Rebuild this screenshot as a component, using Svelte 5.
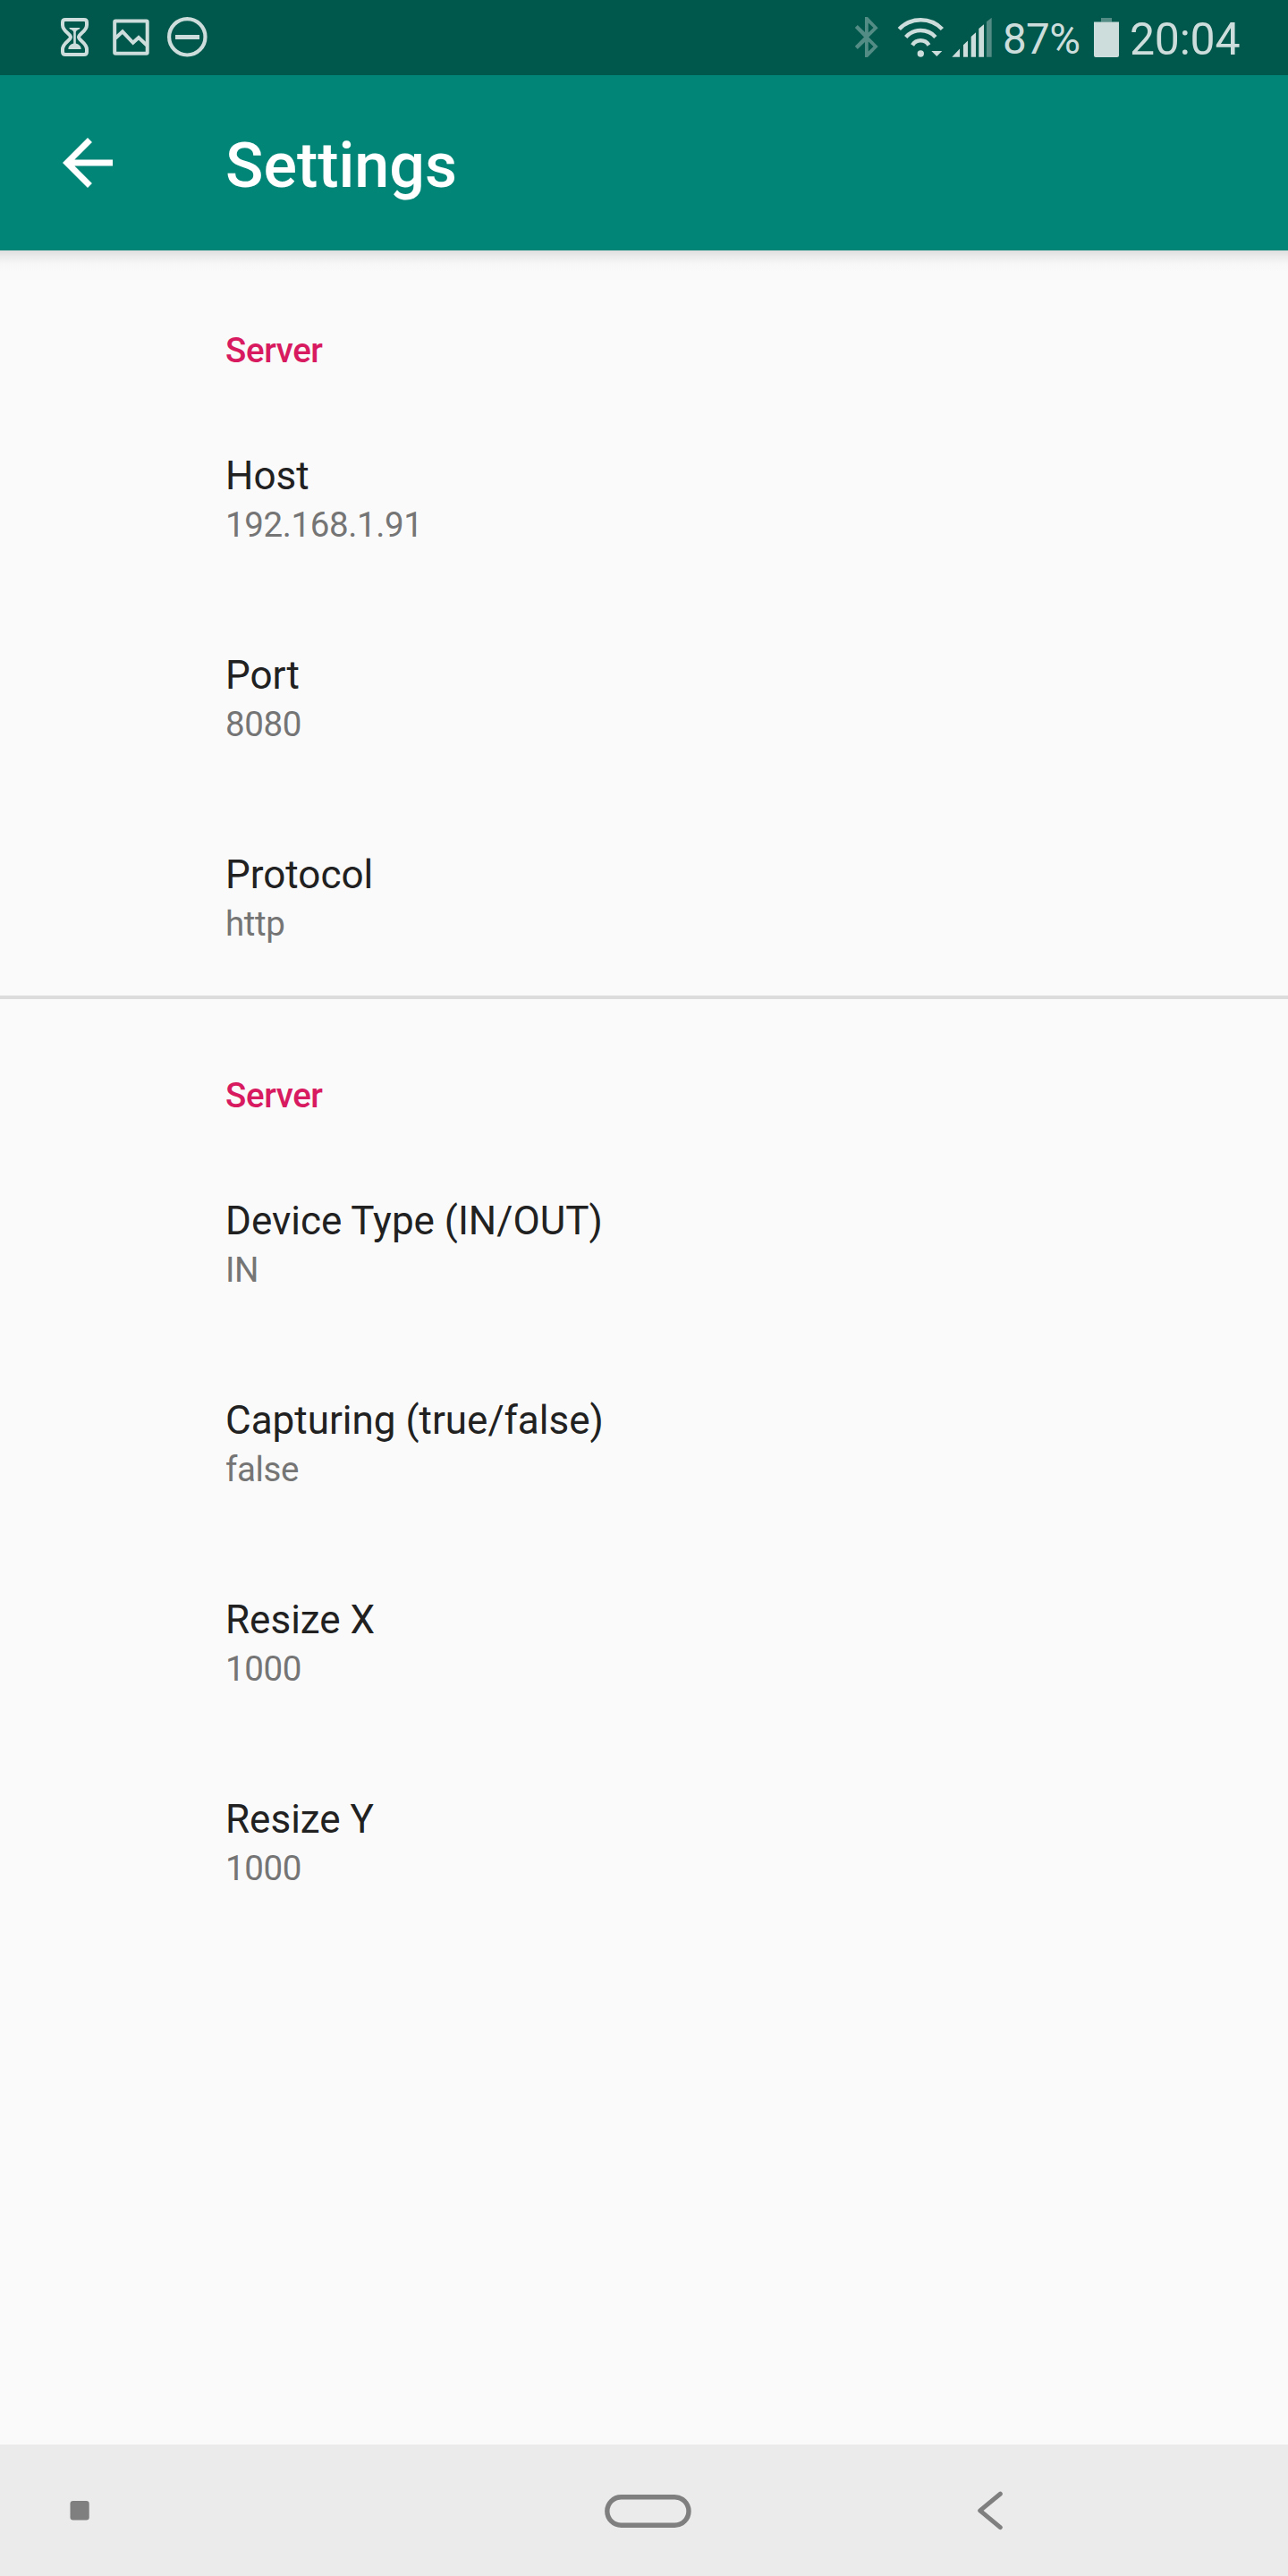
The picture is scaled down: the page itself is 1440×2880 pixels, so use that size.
<script>
  const groups = [
    {
      title: 'Server',
      items: [
        { label: 'Host', value: '192.168.1.91' },
        { label: 'Port', value: '8080' },
        { label: 'Protocol', value: 'http' },
      ],
    },
    {
      title: 'Server',
      items: [
        { label: 'Device Type (IN/OUT)', value: 'IN' },
        { label: 'Capturing (true/false)', value: 'false' },
        { label: 'Resize X', value: '1000' },
        { label: 'Resize Y', value: '1000' },
      ],
    },
  ];
</script>

<div class="screen">
  <div class="status">
    <div class="notifications">
      <svg width="36" height="48" viewBox="0 0 36 48">
        <path d="M7 4H28Q31 4 31 7V10C31 17 22 20 22 23.5C22 27 31 30 31 37V40Q31 43 28 43H7Q4 43 4 40V37C4 30 13 27 13 23.5C13 20 4 17 4 10V7Q4 4 7 4Z" fill="none" stroke="currentColor" stroke-width="4" />
        <path d="M11.3 13H23.5L22.8 14.5Q18.8 16 18.8 18V30.5Q24.7 32 24.7 37H10.3Q10.3 32 16.2 30.5V18Q16.2 16 12 14.5Z" fill="currentColor" />
      </svg>
      <svg width="46" height="48" viewBox="0 0 46 48" fill="none" stroke="currentColor" stroke-width="4">
        <rect x="4.2" y="5.4" width="36.5" height="36.3" rx="1" />
        <path d="M5 24.8 13 17.3 24.7 29.8 31 24 40 32.5" />
      </svg>
      <svg width="48" height="48" viewBox="0 0 48 48" fill="none" stroke="currentColor">
        <circle cx="24.3" cy="23.3" r="20.2" stroke-width="4.2" />
        <path d="M11 23.5H38" stroke-width="5" />
      </svg>
    </div>
    <div class="system">
      <svg class="bluetooth" width="30" height="48" viewBox="0 0 30 48">
        <path fill="currentColor" fill-rule="evenodd" d="M13 1h3L27.7 13.3 17.3 23.5 27.7 34 16 46h-3V29L4.8 37 1.8 33.8 12 23.5 1.8 13 4.8 10 13 18ZM16.8 7.5V18.5L22.5 13ZM16.8 28.5V39.5L22.5 34Z" />
      </svg>
      <svg class="wifi" width="56" height="48" viewBox="0 0 56 48">
        <g fill="none" stroke="currentColor" stroke-width="4.5">
          <path d="M3.3 14.5A33.3 33.3 0 0 1 51.4 14.5" />
          <path d="M10.7 23.4A22.5 22.5 0 0 1 43.9 23.4" />
          <path d="M18.1 32.5A10.8 10.8 0 0 1 36.5 32.5" />
        </g>
        <circle cx="27.3" cy="42" r="3.7" fill="currentColor" />
        <path d="M39.3 39H51.3L45.3 45Z" fill="currentColor" />
      </svg>
      <svg class="signal" width="50" height="48" viewBox="0 0 50 48" fill="currentColor">
        <path d="M2.3 45.7 11 36.5V45.7ZM15 45.7V32.3L20 27.5V45.7ZM23.7 45.7V23L29 18.3V45.7ZM32.3 45.7V14L38 9.3V45.7Z" />
        <path class="faint" d="M41 45.7V6.3L46.7 1.7V45.7Z" />
      </svg>
      <span class="percent">87%</span>
      <svg class="battery" width="28" height="48" viewBox="0 0 28 48" fill="currentColor">
        <path class="faint" d="M8 2H20V6.5H8Z" />
        <path d="M0 6.5H28V44Q28 46 26 46H2Q0 46 0 44Z" />
      </svg>
      <span class="clock">20:04</span>
    </div>
  </div>

  <header class="appbar">
    <svg width="84" height="84" viewBox="0 0 24 24">
      <path fill="#fff" d="M20 11H7.83l5.59-5.59L12 4l-8 8 8 8 1.41-1.41L7.83 13H20v-2z" />
    </svg>
    <h1>Settings</h1>
  </header>

  <main>
    {#each groups as group}
      <section>
        <h2>{group.title}</h2>
        {#each group.items as item}
          <div class="row">
            <div class="label">{item.label}</div>
            <div class="value">{item.value}</div>
          </div>
        {/each}
      </section>
    {/each}
  </main>

  <nav>
    <svg class="recent" width="24" height="24" viewBox="0 0 24 24">
      <rect x="1.5" y="1.1" width="21.2" height="21.4" rx="3.2" fill="#7f7f7f" />
    </svg>
    <svg class="home" width="100" height="40" viewBox="0 0 100 40">
      <rect x="3.8" y="2.8" width="91.2" height="31.4" rx="15.7" fill="none" stroke="#7f7f7f" stroke-width="5.4" />
    </svg>
    <svg class="back" width="32" height="46" viewBox="0 0 32 46">
      <path d="M26.3 4.2 3.7 22.9 26.3 41.7" fill="none" stroke="#7f7f7f" stroke-width="5" stroke-linecap="round" stroke-linejoin="round" />
    </svg>
  </nav>
</div>

<style>
  :global(body) {
    margin: 0;
    background: #fafafa;
  }
  .screen {
    width: 1440px;
    height: 2880px;
    display: flex;
    flex-direction: column;
    overflow: hidden;
    background: #fafafa;
    font-family: Roboto, sans-serif;
  }
  svg {
    display: block;
    flex: none;
  }
  .status {
    flex: none;
    height: 84px;
    display: flex;
    align-items: center;
    justify-content: space-between;
    background: #00574b;
    color: #ccdddb;
  }
  .notifications {
    display: flex;
    gap: 22px;
    padding-left: 66px;
  }
  .notifications svg:last-child {
    margin-left: -7px;
  }
  .system {
    display: flex;
    align-items: center;
    width: 486px;
  }
  .bluetooth,
  .faint {
    opacity: 0.4;
  }
  .wifi {
    margin-left: 18px;
  }
  .signal {
    margin-left: 4px;
  }
  .percent {
    width: 90px;
    margin-left: 9px;
    font-size: 47.5px;
    letter-spacing: -0.6px;
    line-height: 56px;
    padding-top: 4px;
  }
  .battery {
    margin-left: 12px;
  }
  .clock {
    margin-left: 12px;
    font-size: 50px;
    letter-spacing: -0.25px;
    line-height: 58px;
    padding-top: 4px;
  }
  .appbar {
    flex: none;
    height: 196px;
    display: flex;
    align-items: center;
    padding-left: 56px;
    background: #008577;
  }
  h1 {
    margin: 0 0 0 112px;
    padding-top: 6px;
    font-size: 70px;
    line-height: 82px;
    font-weight: 500;
    color: #fff;
  }
  main {
    flex: 1;
    background: linear-gradient(#dedede, #ececec 7px, #f7f7f7 15px, #fafafa 24px);
  }
  section + section {
    border-top: 4px solid #dcdcdc;
  }
  section + section h2 {
    padding-top: 85px;
    height: 75px;
  }
  h2 {
    box-sizing: content-box;
    margin: 0;
    padding: 89px 0 0 252px;
    height: 75px;
    font-size: 38.5px;
    letter-spacing: -0.4px;
    line-height: 46px;
    font-weight: 500;
    color: #d81b60;
  }
  .row {
    box-sizing: border-box;
    height: 223px;
    padding: 61px 0 0 252px;
  }
  .label {
    font-size: 44px;
    line-height: 54px;
    color: #212121;
  }
  .value {
    font-size: 38.5px;
    letter-spacing: -0.4px;
    line-height: 55px;
    color: #757575;
  }
  nav {
    flex: none;
    height: 147px;
    display: flex;
    align-items: center;
    background: #ebebeb;
  }
  .recent {
    margin-left: 77px;
  }
  .home {
    margin-left: 574px;
    margin-top: 5px;
  }
  .back {
    margin-left: 317px;
  }
</style>
